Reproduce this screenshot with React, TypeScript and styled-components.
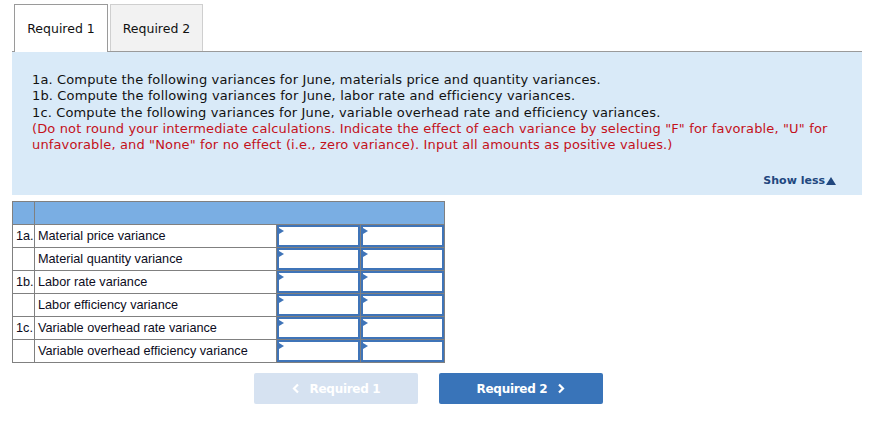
import styled, { createGlobalStyle } from 'styled-components';

const GlobalStyle = createGlobalStyle`
  body {
    margin: 0;
    background: #fff;
    font-family: 'DejaVu Sans', Verdana, sans-serif;
  }
`;

const Page = styled.div`
  width: 870px;
  height: 423px;
  overflow: hidden;
`;

const TabBar = styled.div`
  display: flex;
  gap: 2px;
  margin: 0 8px 0 12px;
  padding: 4px 0 0 2px;
  border-bottom: 1px solid #9a9a9a;
  height: 47px;
`;

const Tab = styled.div<{ $active?: boolean }>`
  display: flex;
  align-items: center;
  justify-content: center;
  width: ${(p) => (p.$active ? '94px' : '93px')};
  height: ${(p) => (p.$active ? '48px' : '47px')};
  box-sizing: border-box;
  border: 1px solid ${(p) => (p.$active ? '#9a9a9a' : '#cfcfcf')};
  border-bottom: none;
  background: ${(p) => (p.$active ? '#fff' : '#f2f2f2')};
  font-size: 12.5px;
  color: #111;
`;

const Panel = styled.div`
  margin: 0 8px 0 12px;
  background: #d9eaf8;
  padding: 20px 26px 8px 20px;
  height: 143px;
  box-sizing: border-box;
  display: flex;
  flex-direction: column;
`;

const Line = styled.div<{ $red?: boolean }>`
  font-size: 13px;
  line-height: 16.3px;
  letter-spacing: 0.14px;
  color: ${(p) => (p.$red ? '#c4111b' : '#111')};
`;

const ShowLess = styled.div`
  margin-top: auto;
  align-self: flex-end;
  font-size: 11px;
  font-weight: bold;
  color: #21477e;
  display: flex;
  align-items: center;
  gap: 1px;
`;

const Table = styled.table`
  margin: 6px 0 0 12px;
  border-collapse: collapse;
  font-family: 'Liberation Sans', Arial, sans-serif;
  font-size: 12.7px;
  color: #0c0c22;
`;

const HeadCell = styled.td<{ $narrow?: boolean }>`
  background: #7aaee3;
  border: 1px solid #808080;
  height: 23px;
  width: ${(p) => (p.$narrow ? '22px' : 'auto')};
  padding: 0;
  box-sizing: border-box;
`;

const NumCell = styled.td`
  width: 22px;
  border: 1px solid #808080;
  height: 23px;
  padding: 0 0 0 3px;
  box-sizing: border-box;
`;

const LabelCell = styled.td`
  width: 242px;
  border: 1px solid #808080;
  padding: 0 3px;
  height: 23px;
  box-sizing: border-box;
  white-space: nowrap;
`;

const InputCell = styled.td`
  width: 84px;
  height: 23px;
  border: 1px solid #808080;
  padding: 0;
  box-sizing: border-box;
`;

const InputBox = styled.div`
  position: relative;
  height: 22px;
  box-sizing: border-box;
  border: 2px solid #3f74b8;
  background: #fff;

  &::before {
    content: '';
    position: absolute;
    left: 0;
    top: 1px;
    border-left: 5px solid #3f74b8;
    border-top: 3px solid transparent;
    border-bottom: 3px solid transparent;
  }
`;

const Nav = styled.div`
  display: flex;
  gap: 21px;
  padding: 10px 0 0 254px;
`;

const NavButton = styled.div<{ $disabled?: boolean }>`
  width: 164px;
  height: 31px;
  border-radius: 2px;
  display: flex;
  align-items: center;
  justify-content: center;
  gap: 10px;
  font-family: 'DejaVu Sans', Tahoma, sans-serif;
  font-weight: bold;
  font-size: 12px;
  letter-spacing: -0.3px;
  color: #fff;
  background: ${(p) => (p.$disabled ? '#d6e2f1' : '#3974b9')};
`;

const rows = [
  { num: '1a.', label: 'Material price variance' },
  { num: '', label: 'Material quantity variance' },
  { num: '1b.', label: 'Labor rate variance' },
  { num: '', label: 'Labor efficiency variance' },
  { num: '1c.', label: 'Variable overhead rate variance' },
  { num: '', label: 'Variable overhead efficiency variance' },
];

function Chevron({ dir }: { dir: 'left' | 'right' }) {
  return (
    <svg width="8" height="11" viewBox="0 0 8 11">
      <polyline
        points={dir === 'left' ? '6,1.5 2,5.5 6,9.5' : '2,1.5 6,5.5 2,9.5'}
        fill="none"
        stroke="#fff"
        strokeWidth="2.2"
      />
    </svg>
  );
}

export default function App() {
  return (
    <Page>
      <GlobalStyle />
      <TabBar>
        <Tab $active>Required 1</Tab>
        <Tab>Required 2</Tab>
      </TabBar>
      <Panel>
        <Line>1a. Compute the following variances for June, materials price and quantity variances.</Line>
        <Line>1b. Compute the following variances for June, labor rate and efficiency variances.</Line>
        <Line>1c. Compute the following variances for June, variable overhead rate and efficiency variances.</Line>
        <Line $red>
          (Do not round your intermediate calculations. Indicate the effect of each variance by selecting "F" for favorable, "U" for
          unfavorable, and "None" for no effect (i.e., zero variance). Input all amounts as positive values.)
        </Line>
        <ShowLess>
          Show less
          <svg width="10" height="8" viewBox="0 0 10 8">
            <polygon points="5,0 10,8 0,8" fill="#21477e" />
          </svg>
        </ShowLess>
      </Panel>
      <Table>
        <tbody>
          <tr>
            <HeadCell $narrow />
            <HeadCell colSpan={3} />
          </tr>
          {rows.map((r, i) => (
            <tr key={i}>
              <NumCell>{r.num}</NumCell>
              <LabelCell>{r.label}</LabelCell>
              <InputCell>
                <InputBox />
              </InputCell>
              <InputCell>
                <InputBox />
              </InputCell>
            </tr>
          ))}
        </tbody>
      </Table>
      <Nav>
        <NavButton $disabled>
          <Chevron dir="left" />
          Required 1
        </NavButton>
        <NavButton>
          Required 2
          <Chevron dir="right" />
        </NavButton>
      </Nav>
    </Page>
  );
}
